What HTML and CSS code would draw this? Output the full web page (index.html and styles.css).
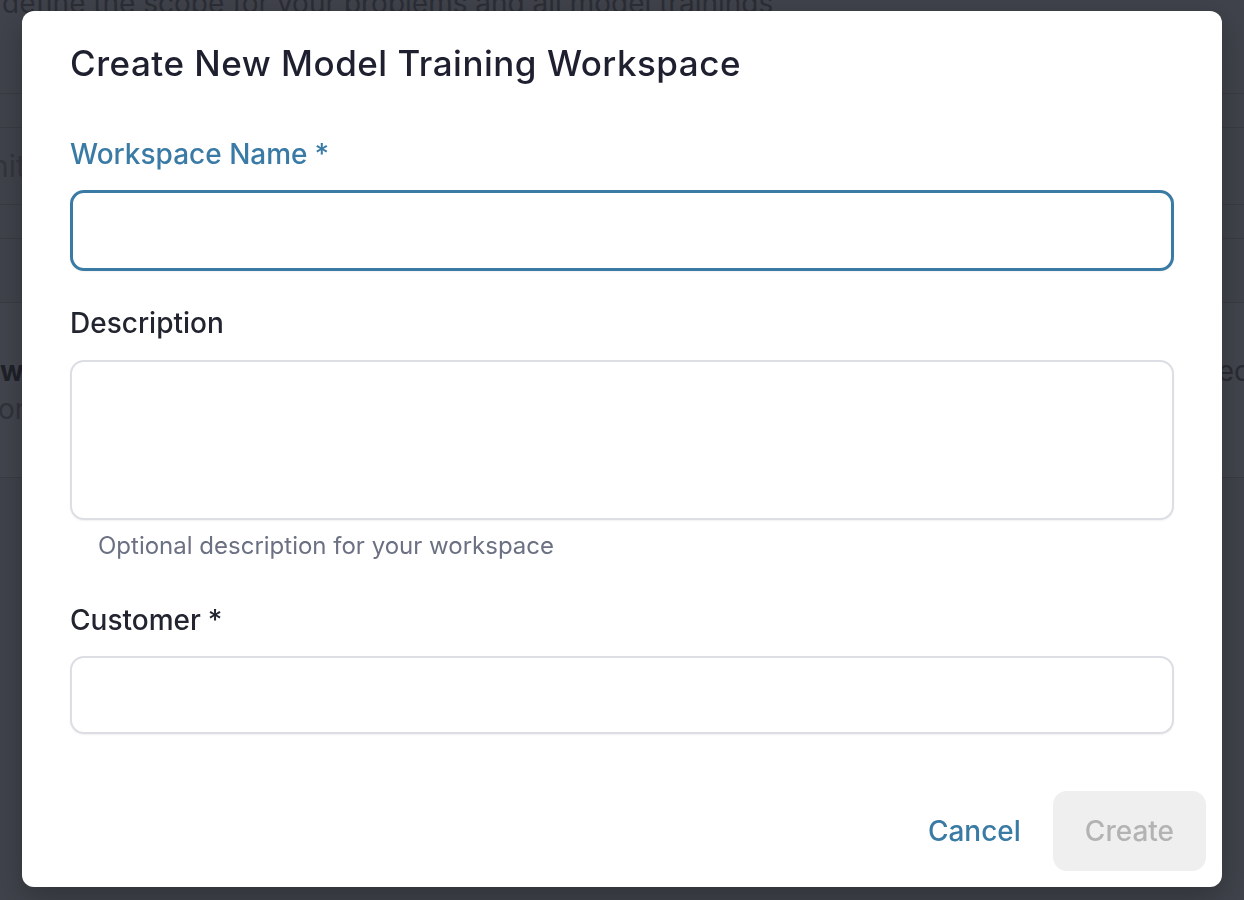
FILE: index.html
```html
<!DOCTYPE html>
<html lang="en">
<head>
  <meta charset="UTF-8">
  <meta name="viewport" content="width=device-width, initial-scale=1.0">
  <title>Create New Model Training Workspace</title>
  <link rel="stylesheet" href="styles.css">
</head>
<body>

  <div class="page">
    <p class="intro">define the scope for your problems and all model trainings</p>
    <div class="band band-top"></div>
    <div class="band band-tabs"></div>
    <div class="band band-search"><span>nit</span></div>
    <div class="band band-head"></div>
    <div class="band band-cols"></div>
    <div class="band band-row">
      <div class="row-left">
        <p class="row-title">w</p>
        <p class="row-sub">on</p>
      </div>
      <p class="row-right">ec</p>
    </div>
  </div>

  <div class="dialog" role="dialog" aria-labelledby="dialog-title">
    <h2 class="dialog-title" id="dialog-title">Create New Model Training Workspace</h2>

    <form class="dialog-form">
      <div class="field">
        <label class="field-label active" for="ws-name">Workspace Name&#8197;*</label>
        <input class="field-input focused" id="ws-name" type="text">
      </div>

      <div class="field field-desc">
        <label class="field-label" for="ws-desc">Description</label>
        <textarea class="field-input field-area" id="ws-desc"></textarea>
        <p class="field-help">Optional description for your workspace</p>
      </div>

      <div class="field field-customer">
        <label class="field-label" for="ws-customer">Customer&#8197;*</label>
        <input class="field-input" id="ws-customer" type="text">
      </div>
    </form>

    <div class="dialog-actions">
      <button class="btn-text" type="button">Cancel</button>
      <button class="btn-create" type="button" disabled>Create</button>
    </div>
  </div>

</body>
</html>
```

FILE: styles.css
```css
* { box-sizing: border-box; margin: 0; padding: 0; }
html, body { height: 100%; overflow: hidden; }
body {
  font-family: Inter, "Noto Sans", sans-serif;
  background: #40434b;
  color: #25272e;
}

/* page under the dialog, already dimmed */
.page { width: 100%; }
.intro {
  font-size: 28px;
  line-height: 39px;
  margin-top: -16px;
  padding-left: 2px;
  color: #2c2e36;
  white-space: nowrap;
}
.band { border-bottom: 1px solid #393c43; }
.band-top { height: 71px; }
.band-tabs { height: 34px; }
.band-search {
  height: 77px;
  display: flex;
  align-items: center;
  font-size: 30px;
  color: #33363d;
}
.band-search span { margin-left: -9px; }
.band-head { height: 34px; }
.band-cols { height: 64px; }
.band-row {
  height: 175px;
  background: #42454d;
  display: flex;
  justify-content: space-between;
  align-items: flex-start;
  padding-top: 50px;
}
.row-title { font-size: 28px; font-weight: 700; color: #1f2129; line-height: 36px; }
.row-sub { font-size: 28px; color: #30333a; line-height: 40px; margin-left: -2px; }
.row-right { font-size: 28px; color: #2a2c35; line-height: 36px; margin-right: -6px; }

/* dialog */
.dialog {
  position: fixed;
  top: 11px;
  left: 22px;
  width: 1200px;
  background: #fff;
  border-radius: 12px;
  padding: 27px 0 16px;
  box-shadow: 0 10px 30px rgba(0, 0, 0, 0.25);
}
.dialog-title {
  font-size: 35px;
  font-weight: 500;
  line-height: 51px;
  letter-spacing: 0.5px;
  color: #1e2030;
  padding: 0 48px;
}
.dialog-form {
  padding: 0 48px;
  margin-top: 46px;
  display: flex;
  flex-direction: column;
}
.field { display: flex; flex-direction: column; }
.field-desc { margin-top: 33px; }
.field-customer { margin-top: 39px; }
.field-label {
  font-size: 28px;
  font-weight: 500;
  line-height: 39px;
  color: #22252f;
  margin-bottom: 16px;
}
.field-label.active { color: #3a7ba5; }
.field-desc .field-label { margin-bottom: 17px; }
.field-input {
  width: 100%;
  height: 78px;
  border: 2px solid #dddee3;
  border-radius: 14px;
  background: #fff;
  font-family: inherit;
  font-size: 28px;
  padding: 0 24px;
  box-shadow: 0 1px 2px rgba(0, 0, 0, 0.06);
  outline: none;
  resize: none;
}
.field-input.focused {
  height: 81px;
  border: 3px solid #3a7ba5;
}
.field-area { height: 160px; }
.field-help {
  font-size: 24px;
  line-height: 32px;
  color: #6b7182;
  margin: 10px 0 0 28px;
}

.dialog-actions {
  display: flex;
  justify-content: flex-end;
  align-items: center;
  gap: 16px;
  padding: 0 16px;
  margin-top: 57px;
}
.btn-text, .btn-create {
  font-family: inherit;
  font-size: 28px;
  font-weight: 500;
  border: none;
  background: none;
  height: 80px;
  border-radius: 14px;
  cursor: pointer;
}
.btn-text { color: #3a7ba5; padding: 0 16px; }
.btn-create {
  background: #efefef;
  color: #b3b3b3;
  padding: 0 32px;
  cursor: default;
}
```
